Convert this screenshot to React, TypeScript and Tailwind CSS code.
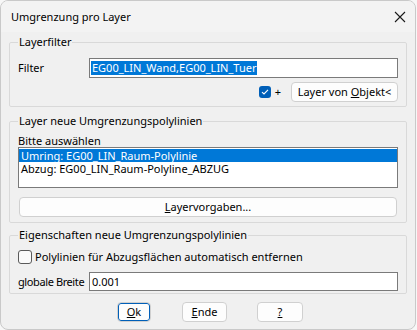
import React from 'react';

const font = { fontFamily: '"Segoe UI", "Noto Sans", "Liberation Sans", sans-serif' };

function Btn({ children, className = '' }: { children: React.ReactNode; className?: string }) {
  return (
    <div
      className={`flex h-[20px] items-center justify-center rounded-[4px] border border-[#d0d0d0] bg-[#fdfdfd] text-[11px] leading-[14px] text-black ${className}`}
    >
      <span className="whitespace-nowrap">{children}</span>
    </div>
  );
}

function Group({ title, children, className = '' }: { title: string; children: React.ReactNode; className?: string }) {
  return (
    <fieldset className={`mx-[8px] rounded-[2px] border border-[#d9d9d9] px-[8px] ${className}`}>
      <legend className="px-[1px] text-[11px] leading-[14px] text-black">{title}</legend>
      {children}
    </fieldset>
  );
}

export default function App() {
  return (
    <div className="h-[330px] w-[417px] bg-[#f7f7f7]" style={font}>
      <div className="flex h-[330px] w-[416px] flex-col overflow-hidden rounded-[8px] border border-[#c9c9c9] bg-[#f0f0f0]">
        {/* title bar */}
        <div className="flex h-[31px] shrink-0 items-center justify-between bg-[#f3f3f3] pl-[10px] pr-[8px]">
          <span className="text-[11px] leading-[14px] text-black">Umgrenzung pro Layer</span>
          <svg width="12" height="12" viewBox="0 0 12 12" className="mr-[1px]">
            <path d="M1 1 L11 11 M11 1 L1 11" stroke="#1a1a1a" strokeWidth="1.1" />
          </svg>
        </div>

        <Group title="Layerfilter" className="mt-[3px] pb-[4px]">
          <div className="mt-[9px] flex items-center">
            <span className="w-[71px] text-[11px] leading-[14px] text-black">Filter</span>
            <div className="flex h-[20px] flex-1 items-center border border-[#7a7a7a] bg-white pl-[1px]">
              <span className="bg-[#0078d7] px-[1px] text-[11px] leading-[14px] text-white">EG00_LIN_Wand,EG00_LIN_Tuer</span>
            </div>
          </div>
          <div className="mt-[4px] flex items-center justify-end">
            <div className="flex h-[12px] w-[12px] items-center justify-center rounded-[3px] bg-[#005fb8]">
              <svg width="8" height="8" viewBox="0 0 8 8">
                <path d="M1 4.2 L3 6 L7 1.8" stroke="white" strokeWidth="1.1" fill="none" />
              </svg>
            </div>
            <span className="ml-[4px] mr-[10px] text-[11px] leading-[14px] text-black">+</span>
            <Btn className="w-[107px]">
              Layer von <span className="underline">O</span>bjekt&lt;
            </Btn>
          </div>
        </Group>

        <Group title="Layer neue Umgrenzungspolylinien" className="mt-[7px] pb-[5px]">
          <div className="mt-[6px] text-[11px] leading-[14px] text-black">Bitte auswählen</div>
          <div className="mt-[-1px] h-[41px] border border-[#7a7a7a] bg-white pt-[1px] text-[11px] leading-[14px]">
            <div className="h-[13px] bg-[#0078d7] pl-[2px] leading-[13px] text-white">Umring: EG00_LIN_Raum-Polylinie</div>
            <div className="h-[14px] pl-[2px] leading-[14px] text-black">Abzug: EG00_LIN_Raum-Polyline_ABZUG</div>
          </div>
          <Btn className="mx-[1px] mt-[9px]">
            <span className="underline">L</span>ayervorgaben...
          </Btn>
        </Group>

        <Group title="Eigenschaften neue Umgrenzungspolylinien" className="mt-[5px] pb-[2px]">
          <div className="mt-[8px] flex items-center">
            <div className="h-[14px] w-[14px] rounded-[3px] border border-[#5a5a5a] bg-[#fafafa]" />
            <span className="ml-[3px] text-[11px] leading-[14px] text-black">Polylinien für Abzugsflächen automatisch entfernen</span>
          </div>
          <div className="mt-[8px] flex items-center">
            <span className="w-[71px] whitespace-nowrap text-[11px] leading-[14px] tracking-[-0.4px] text-black">globale Breite</span>
            <div className="flex h-[19px] flex-1 items-center border border-[#7a7a7a] bg-white pl-[2px] text-[11px] leading-[14px] text-black">
              0.001
            </div>
          </div>
        </Group>

        <div className="mt-[8px] flex">
          <Btn className="ml-[116px] w-[34px] border-[#005fb8] shadow-[inset_0_0_0_1px_#005fb8]">
            <span className="underline">O</span>k
          </Btn>
          <Btn className="ml-[31px] w-[45px]">
            <span className="underline">E</span>nde
          </Btn>
          <Btn className="ml-[30px] w-[46px]">
            <span className="underline">?</span>
          </Btn>
        </div>
      </div>
    </div>
  );
}
